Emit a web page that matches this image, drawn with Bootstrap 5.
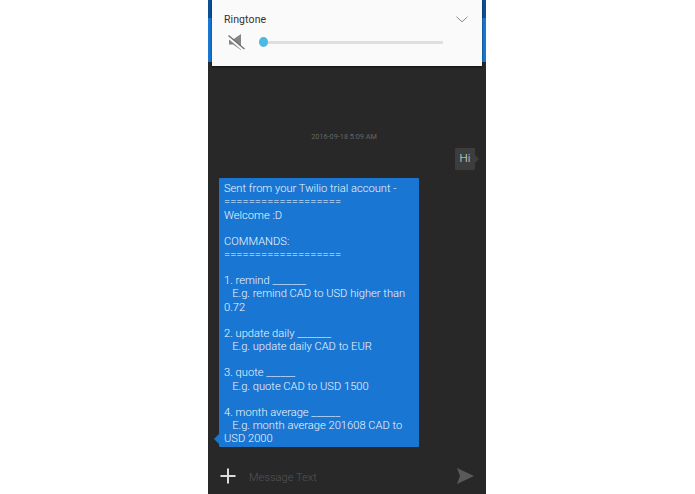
<!DOCTYPE html>
<html lang="en"><head><meta charset="utf-8"><title>Chat</title>
<link href="https://cdn.jsdelivr.net/npm/bootstrap@5.3.0/dist/css/bootstrap.min.css" rel="stylesheet">
<style>
html,body{height:494px;overflow:hidden;background:#fff;margin:0}
body{font-family:Roboto,"Liberation Sans",sans-serif}
.phone{width:278px;height:494px;margin-left:208px;background:#282828;position:relative;overflow:hidden}
.appbar{height:62px;background:linear-gradient(#0d4f94 0,#0d4f94 18px,#1976d2 18px)}
.ring-panel{position:absolute;left:4px;top:0;width:270px;height:66px;background:#fafafa;box-shadow:0 1px 2px rgba(0,0,0,.6);padding:13px 14px 0 12px}
.ring-title{font-size:10.5px;line-height:13px;color:#333;letter-spacing:.1px}
.ring-row{margin-top:7px;height:18px;padding-left:4px}
.track{margin-left:14px;width:184px;height:3px;background:#dfdfdf;position:relative}
.knob{position:absolute;left:0;top:-3.500px;width:9px;height:10px;border-radius:50%;background:#4db8e2}
.chat-area{height:432px;position:relative}
.stamp{padding-top:69px;padding-right:6px;font-size:7.300px;line-height:11px;color:#666;text-align:center;font-weight:400}
.out-row{margin-top:6px;padding-right:11px}
.out-bubble{position:relative;background:#3d3d3d;color:#e2e2e2;font-size:11.600px;font-weight:300;width:20px;height:22px;line-height:21px;text-align:center;border-radius:1px}
.out-bubble::after{content:"";position:absolute;right:-4px;top:7px;border-left:4px solid #3d3d3d;border-top:4px solid transparent;border-bottom:4px solid transparent}
.in-bubble{position:relative;margin:8px 0 0 11px;width:200px;height:269px;background:#1976d2;color:#f2f7fd;font-size:11.150px;line-height:13.160px;font-weight:300;padding:4.200px 5px 0;border-radius:1px;white-space:pre-wrap}
.in-bubble::before{content:"";position:absolute;left:-5px;bottom:3px;border-right:5px solid #1976d2;border-top:5px solid transparent;border-bottom:5px solid transparent}
.compose{position:absolute;left:0;right:0;bottom:0;height:37px;padding:0 12px 0 12px}
.ph{font-size:11.100px;font-weight:300;color:#555;margin-left:13px;padding-top:5px}
</style></head>
<body>
<div class="phone">
  <div class="appbar"></div>
  <div class="ring-panel">
    <div class="d-flex justify-content-between align-items-center">
      <span class="ring-title">Ringtone</span>
      <svg width="12" height="7" viewBox="0 0 12 7" aria-hidden="true"><path d="M.5.8 6 5.8 11.5.8" fill="none" stroke="#8a8a8a" stroke-width="1"/></svg>
    </div>
    <div class="ring-row d-flex align-items-center">
      <svg width="17" height="18" viewBox="0 0 17 18" aria-hidden="true"><path d="M1 6.500h4L13 1v16L5 11.500H1z" fill="#858585"/><path d="M0 4 15.500 17" stroke="#fafafa" stroke-width="2.400"/><path d="M.5 2.500 16.500 16" stroke="#6e6e6e" stroke-width="1.300"/></svg>
      <div class="track"><div class="knob"></div></div>
    </div>
  </div>
  <div class="chat-area">
    <div class="stamp">2016-09-18 5:09 AM</div>
    <div class="out-row d-flex justify-content-end"><div class="out-bubble">Hi</div></div>
    <div class="in-bubble">Sent from your Twilio trial account -
===================
Welcome :D

COMMANDS:
===================

1. remind _______
   E.g. remind CAD to USD higher than 0.72

2. update daily _______
   E.g. update daily CAD to EUR

3. quote ______
   E.g. quote CAD to USD 1500

4. month average ______
   E.g. month average 201608 CAD to USD 2000</div>
    <div class="compose d-flex align-items-center">
      <svg width="16" height="16" viewBox="0 0 16 16" aria-hidden="true"><path d="M8 .5v15M.5 8h15" stroke="#dcdcdc" stroke-width="2"/></svg>
      <span class="ph">Message Text</span>
      <svg class="ms-auto" width="17" height="16" viewBox="0 0 17 16" aria-hidden="true"><path d="M0 0 17 8 0 16l3-8z" fill="#5a5a5a"/></svg>
    </div>
  </div>
</div>
<script src="https://cdn.jsdelivr.net/npm/bootstrap@5.3.0/dist/js/bootstrap.bundle.min.js"></script>
</body></html>
